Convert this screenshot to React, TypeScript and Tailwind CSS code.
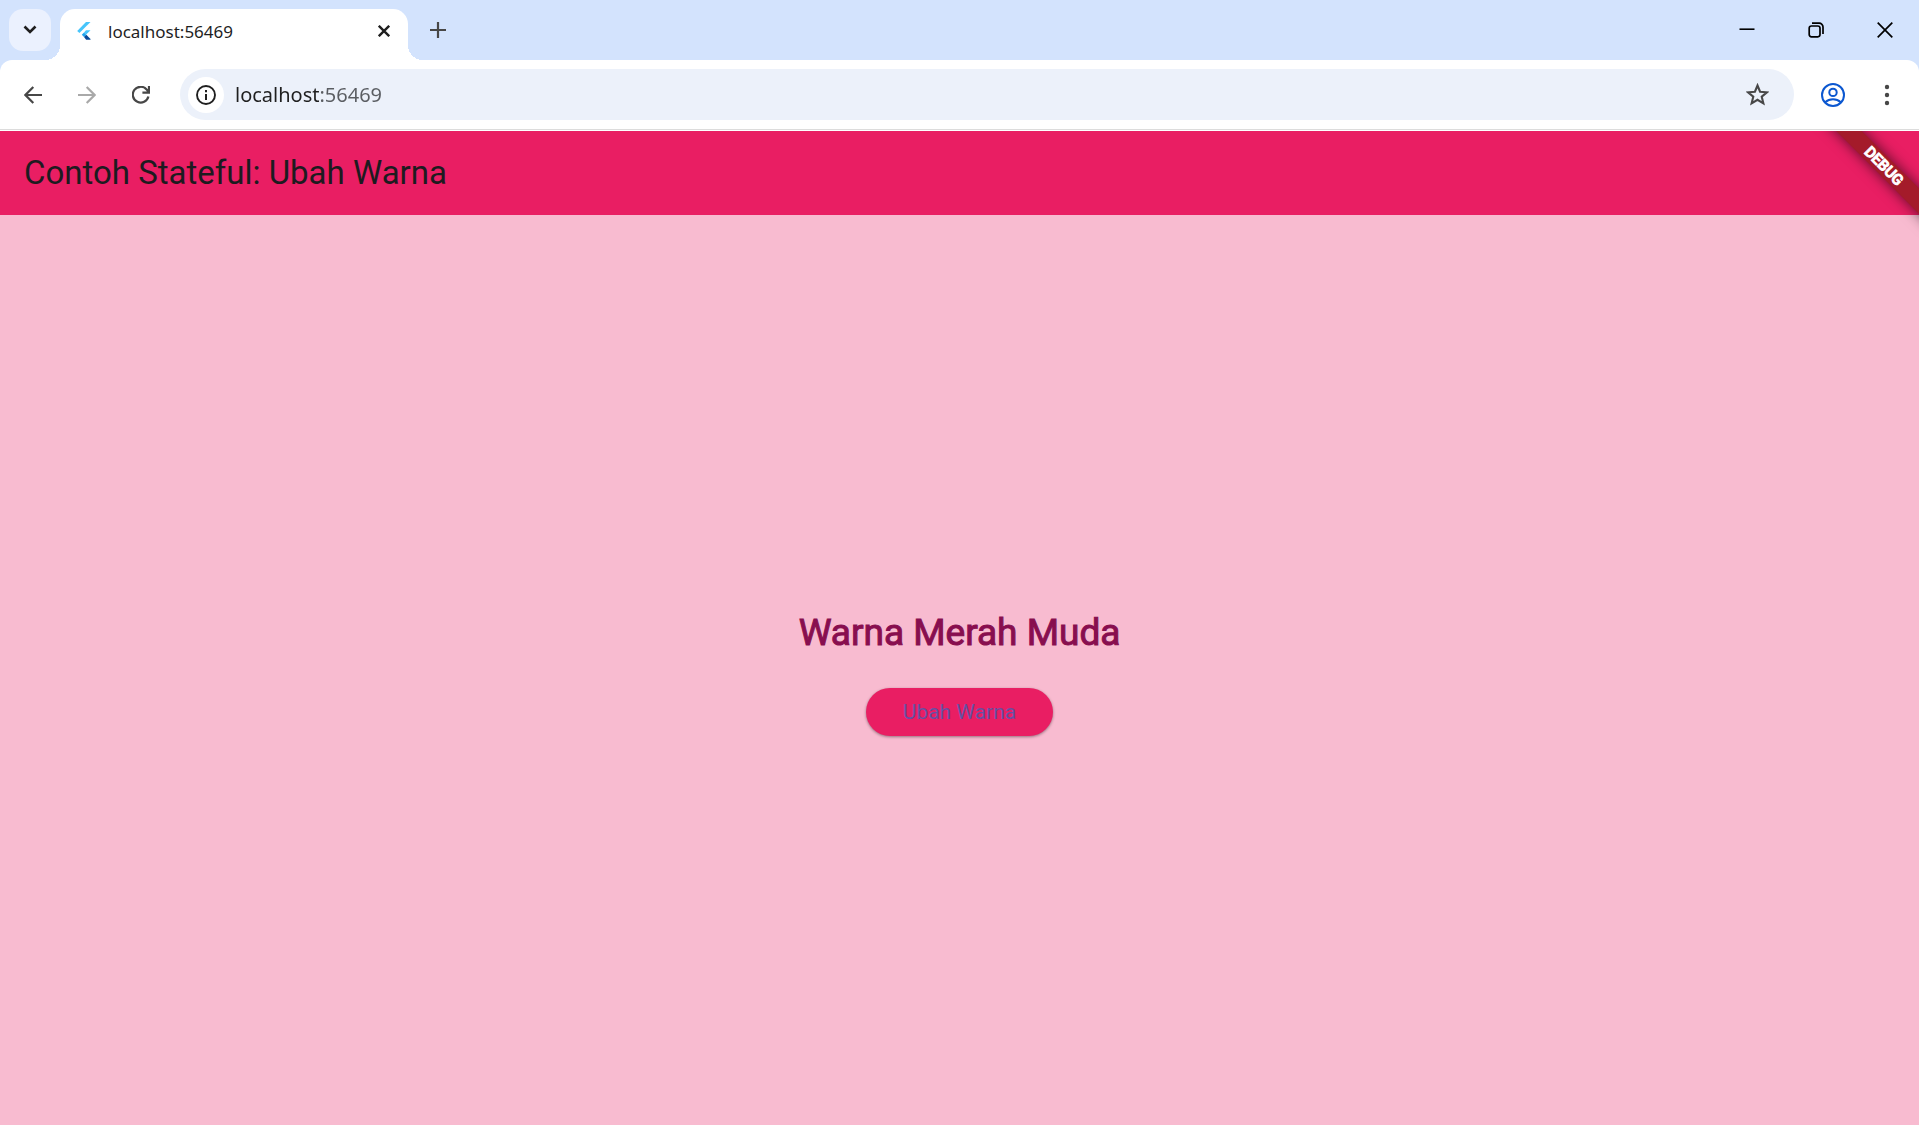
import { useState } from "react";

const stroke = { fill: "none", stroke: "currentColor" } as const;

function FlutterMark() {
  return (
    <svg viewBox="0 0 14 18" className="h-[18px] w-[14px]">
      <path d="M9 0h4.5L2.4 11.1.2 8.9z" fill="#47c5fb" />
      <path d="M9 8.3h4.5L9.2 12.6 7 10.4z" fill="#47c5fb" />
      <path d="M7 10.4 9.3 12.7 7 15 4.8 12.7z" fill="#1fa5ee" />
      <path d="M7 15 9.3 12.7 13.5 17v.8H9.2z" fill="#06489a" />
    </svg>
  );
}

function TabStrip() {
  return (
    <div className="flex h-15 items-start bg-[#d3e3fd] pl-[9px] pt-[9px]">
      <button aria-label="Search tabs" className="flex size-[42px] items-center justify-center rounded-[14px] bg-[#ebf1fe] text-[#1f1f1f]">
        <svg viewBox="0 0 14 10" className="h-[10px] w-[14px]" {...stroke} strokeWidth="2.6">
          <path d="M1.5 1.5 7 7l5.5-5.5" />
        </svg>
      </button>
      <div className="relative ml-[9px] flex h-[51px] w-[348px] items-center rounded-t-[15px] bg-white pb-2 pl-[17px] pr-[15px] before:absolute before:-left-[15px] before:bottom-0 before:size-[15px] before:bg-[radial-gradient(circle_at_top_left,transparent_15px,white_15px)] after:absolute after:-right-[15px] after:bottom-0 after:size-[15px] after:bg-[radial-gradient(circle_at_top_right,transparent_15px,white_15px)]">
        <FlutterMark />
        <span className="ml-[17px] flex-1 pt-0.5 text-[17px] leading-6 text-[#1f1f1f]">localhost:56469</span>
        <button aria-label="Close tab" className="flex size-[18px] items-center justify-center text-[#1f1f1f]">
          <svg viewBox="0 0 12 12" className="size-3" {...stroke} strokeWidth="2.4">
            <path d="M.8.8 11.2 11.2M11.2.8.8 11.2" />
          </svg>
        </button>
      </div>
      <button aria-label="New tab" className="ml-[9px] flex size-[42px] items-center justify-center text-[#474747]">
        <svg viewBox="0 0 16 16" className="size-4" {...stroke} strokeWidth="2.2">
          <path d="M8 0v16M0 8h16" />
        </svg>
      </button>
      <div className="ml-auto flex text-black">
        <button aria-label="Minimize" className="flex h-[42px] w-[69px] items-center justify-center">
          <svg viewBox="0 0 16 16" className="size-4" {...stroke} strokeWidth="1.6">
            <path d="M.5 7.2h15" />
          </svg>
        </button>
        <button aria-label="Restore" className="flex h-[42px] w-[69px] items-center justify-center">
          <svg viewBox="0 0 16 16" className="size-4" {...stroke} strokeWidth="1.7">
            <rect x="1.2" y="4" width="10.8" height="10.8" rx="2.2" />
            <path d="M4 1.2h7.2a3.8 3.8 0 0 1 3.8 3.8V12" />
          </svg>
        </button>
        <button aria-label="Close window" className="flex h-[42px] w-[69px] items-center justify-center">
          <svg viewBox="0 0 16 16" className="size-4" {...stroke} strokeWidth="1.7">
            <path d="M.7.7 15.3 15.3M15.3.7.7 15.3" />
          </svg>
        </button>
      </div>
    </div>
  );
}

function Toolbar() {
  return (
    <div className="bg-[#d3e3fd]">
      <div className="flex h-[71px] items-start rounded-t-xl bg-white pt-[9px] shadow-[inset_0_-1px_#fff,inset_0_-2px_#dcdcdc]">
        <div className="flex h-[51px] items-center gap-9 pl-6 text-[#474747]">
          <button aria-label="Back">
            <svg viewBox="0 0 18 18" className="size-[18px]" {...stroke} strokeWidth="2.2">
              <path d="M18 9H2M9.3 1 1.4 9l7.9 8" />
            </svg>
          </button>
          <button aria-label="Forward" disabled className="text-[#a9a9a9]">
            <svg viewBox="0 0 18 18" className="size-[18px]" {...stroke} strokeWidth="2.2">
              <path d="M0 9h16M8.7 1l7.9 8-7.9 8" />
            </svg>
          </button>
          <button aria-label="Reload">
            <svg viewBox="0 0 18 18" className="size-[18px]" {...stroke} strokeWidth="2.2">
              <path d="M16.4 10.5A7.9 7.9 0 1 1 14.6 3.4L16.6 6M17 0v6.6h-6.6" />
            </svg>
          </button>
        </div>
        <div className="ml-[30px] flex h-[51px] flex-1 items-center rounded-full bg-[#ecf1fa] pl-2 pr-[25px]">
          <button aria-label="View site information" className="flex size-[36px] items-center justify-center rounded-full bg-white text-[#1f1f1f]">
            <svg viewBox="0 0 20 20" className="size-5" {...stroke} strokeWidth="1.9">
              <circle cx="10" cy="10" r="9" />
              <path d="M10 9v6M10 5v2.2" strokeWidth="2" />
            </svg>
          </button>
          <input
            aria-label="Address"
            defaultValue="localhost:56469"
            className="ml-[11px] min-w-0 flex-1 bg-[linear-gradient(to_right,#1f1f1f_84px,#5a5d62_84px)] bg-clip-text text-xl leading-7 text-transparent outline-none"
          />
          <button aria-label="Bookmark this tab" className="text-[#474747]">
            <svg viewBox="0 0 24 24" className="size-[23px]" {...stroke} strokeWidth="2.2">
              <path d="m12 2.6 2.7 6.5 7.1.6-5.4 4.6 1.7 6.9-6.1-3.7-6.1 3.7 1.7-6.9-5.4-4.6 7.1-.6z" />
            </svg>
          </button>
        </div>
        <div className="flex h-[51px] items-center pl-[27px] pr-[29px]">
          <button aria-label="Profile" className="text-[#0b57d0]">
            <svg viewBox="0 0 24 24" className="size-6" {...stroke} strokeWidth="2">
              <circle cx="12" cy="12" r="11" />
              <circle cx="12" cy="9.4" r="3.7" />
              <path d="M4.2 19.3c4.4-4 11.2-4 15.6 0" />
            </svg>
          </button>
          <button aria-label="Browser menu" className="ml-[39px] text-[#474747]">
            <svg viewBox="0 0 6 22" className="h-[22px] w-[6px]" fill="currentColor">
              <circle cx="3" cy="3" r="2.2" />
              <circle cx="3" cy="11" r="2.2" />
              <circle cx="3" cy="19" r="2.2" />
            </svg>
          </button>
        </div>
      </div>
    </div>
  );
}

const palettes = [
  { name: "Warna Merah Muda", bar: "bg-[#e91e63]", page: "bg-[#f8bbd0]", text: "text-[#880e4f]" },
  { name: "Warna Biru", bar: "bg-[#2196f3]", page: "bg-[#bbdefb]", text: "text-[#0d47a1]" },
];

export default function App() {
  const [index, setIndex] = useState(0);
  const palette = palettes[index];
  return (
    <div className="flex min-h-screen flex-col font-['Noto_Sans',sans-serif]">
      <TabStrip />
      <Toolbar />
      <div className={`relative flex flex-1 flex-col font-[Roboto,sans-serif] ${palette.page}`}>
        <header className={`flex h-21 items-center px-6 ${palette.bar}`}>
          <h1 className="text-[33px] leading-[42px] text-[#1d1b20]">Contoh Stateful: Ubah Warna</h1>
        </header>
        <div className="pointer-events-none absolute right-0 top-0 size-28 overflow-hidden">
          <div className="absolute -right-[45px] top-[26px] flex h-[18px] w-40 rotate-45 items-center justify-center bg-[#a41b2a] text-[15px] font-medium leading-none text-white shadow-[0_0_14px_rgba(0,0,0,0.6)] [-webkit-text-stroke:1px_currentColor]">
            DEBUG
          </div>
        </div>
        <main className="flex flex-1 flex-col items-center justify-center gap-[26px]">
          <h2 className={`text-[37px] leading-[58px] [-webkit-text-stroke:1px_currentColor] ${palette.text}`}>{palette.name}</h2>
          <button
            onClick={() => setIndex((index + 1) % palettes.length)}
            className={`h-12 rounded-full px-[37px] text-[21px] leading-[30px] text-[#6750a4] shadow-[0_1px_3px_rgba(0,0,0,0.4)] ${palette.bar}`}
          >
            Ubah Warna
          </button>
        </main>
      </div>
    </div>
  );
}
